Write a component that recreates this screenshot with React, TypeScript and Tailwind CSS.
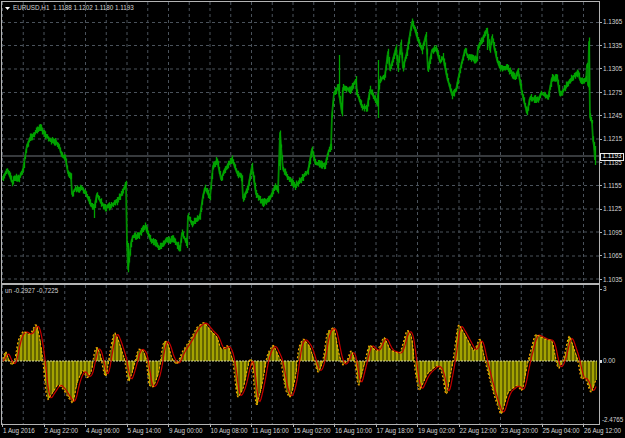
const PRICE: number[][] = [[2,179],[4,176],[7,170],[9,174],[12,182],[15,178],[19,178],[23,170],[27,145],[30,138],[35,133],[40,127],[45,135],[50,140],[55,142],[59,146],[62,156],[65,156],[68,173],[71,176],[72,194],[75,189],[82,188],[86,194],[90,203],[94,209],[97,194],[100,201],[105,208],[110,206],[117,201],[122,193],[126,183],[127,243],[128,269],[131,243],[133,236],[138,236],[145,226],[150,239],[155,243],[159,248],[165,241],[173,239],[180,249],[182,233],[187,244],[188,216],[192,224],[200,216],[203,196],[205,188],[210,198],[213,166],[217,160],[221,179],[225,169],[232,159],[237,173],[242,178],[243,198],[248,188],[252,166],[256,194],[263,203],[270,198],[275,186],[278,191],[280,133],[281,146],[283,169],[288,178],[295,186],[302,178],[308,171],[312,149],[315,163],[325,166],[328,153],[331,146],[332,115],[334,93],[338,87],[342,113],[343,88],[350,90],[356,80],[357,93],[362,107],[367,108],[370,90],[377,103],[380,80],[385,75],[388,52],[390,70],[396,48],[398,68],[401,43],[403,68],[407,52],[412,22],[415,30],[418,40],[422,50],[426,35],[428,70],[432,50],[436,48],[440,62],[443,57],[447,77],[452,95],[456,90],[460,70],[465,50],[468,57],[477,60],[478,47],[487,30],[490,50],[492,37],[497,60],[500,68],[507,68],[515,78],[518,70],[522,93],[527,113],[530,98],[538,100],[541,93],[548,98],[552,78],[557,77],[560,95],[570,80],[578,72],[580,80],[586,80],[587,65],[588,85],[589,42],[590,117],[592,122],[593,140],[594,146],[595,160]];
const SPIKES: number[][] = [[94,205,218],[128,243,270],[339,55,95],[342,90,115],[378,60,118],[280,133,170],[589,42,90],[595,146,165],[487,30,50],[356,78,95]];
const HIST: number[][] = [[3,361],[5,349],[8,358],[12,366],[15,360],[18,340],[23,331],[30,335],[36,323],[39,334],[43,361],[45,384],[47,401],[53,392],[58,384],[63,389],[68,397],[73,404],[77,382],[83,369],[87,379],[92,370],[94,352],[97,346],[101,357],[103,370],[106,379],[109,357],[114,331],[118,339],[125,361],[128,384],[133,370],[138,349],[143,350],[147,361],[148,384],[153,388],[159,372],[163,342],[167,341],[172,359],[177,365],[182,352],[190,340],[197,327],[204,322],[210,330],[217,337],[221,350],[228,345],[233,361],[237,399],[243,389],[250,357],[252,361],[256,409],[262,385],[267,355],[273,344],[278,355],[281,361],[285,389],[290,399],[296,375],[298,349],[303,338],[310,347],[314,361],[318,374],[323,361],[327,332],[334,327],[338,350],[342,366],[347,361],[351,349],[355,361],[358,389],[365,361],[369,344],[377,352],[384,336],[390,350],[400,354],[407,329],[412,337],[415,372],[419,392],[427,374],[437,365],[442,372],[446,398],[453,361],[458,323],[465,335],[474,352],[480,337],[485,361],[493,392],[501,416],[508,392],[517,385],[522,392],[528,361],[535,334],[547,340],[552,340],[558,370],[563,361],[569,334],[578,361],[581,380],[585,377],[591,394],[596,379]];
const TIMES = ["1 Aug 2016","2 Aug 22:00","4 Aug 06:00","5 Aug 14:00","9 Aug 00:00","10 Aug 08:00","11 Aug 16:00","15 Aug 02:00","16 Aug 10:00","17 Aug 18:00","19 Aug 02:00","22 Aug 12:00","23 Aug 20:00","25 Aug 04:00","26 Aug 12:00"];
const PRICES = ["1.1365","1.1335","1.1305","1.1275","1.1245","1.1215","1.1185","1.1155","1.1125","1.1095","1.1065","1.1035"];
const HGRID = [22.5,45.5,69,92.5,115.5,139,162,185.5,209,232,256,279];
const VGRID = Array.from({length:29},(_,i)=>2.5+i*20.75);
const lerp=(pts:number[][],x:number)=>{for(let i=1;i<pts.length;i++){if(x<=pts[i][0]){const [a,b]=pts[i-1],[c,d]=pts[i];return b+(d-b)*(x-a)/(c-a);}}return pts[pts.length-1][1];};
const rnd=(n:number)=>{const s=Math.sin(n*12.9898)*43758.5453;return s-Math.floor(s);};
const poly=(p:number[][])=>p.map(q=>q.join(",")).join(" ");
let priceBars="";
for(let x=2;x<=595;x++){const y=lerp(PRICE,x);priceBars+=`M${x+.5} ${(y-1.2-rnd(x)*3.2).toFixed(1)}V${(y+1.2+rnd(x+77)*3.2).toFixed(1)}`;}
for(const [x,a,b] of SPIKES)priceBars+=`M${x+.5} ${a}V${b}`;
const xs:number[]=[];for(let x=3;x<=596;x++)xs.push(x);
const smooth=(x:number,w:number)=>{let s=0;for(let i=-w;i<=w;i++)s+=lerp(HIST,Math.max(3,Math.min(596,x+i)));return s/(2*w+1);};
let bright="",dark="";
for(const x of xs){const y=smooth(x,1).toFixed(1);const seg=`M${x+.5} 361V${y}`;if(x%4<2)bright+=seg;else dark+=seg;}
const signal=xs.map(x=>[x,+smooth(x-2.5,2).toFixed(1)]);
const fast=xs.map(x=>[x,+smooth(x,1).toFixed(1)]);
const grid="#4a525b";

export default function App(){
  return (
    <div className="w-[625px] h-[438px] bg-black overflow-hidden flex flex-col pt-px text-[6.3px] text-[#d4d4d4] font-['Liberation_Sans',sans-serif]">
      <section className="relative flex h-[283px] shrink-0">
        <div className="ml-px w-[599px] border border-[#b4b4b4] bg-black relative">
          <svg width="597" height="281" viewBox="2 2 597 281" className="block">
            {HGRID.map(y=><line key={y} x1="2" x2="599" y1={y} y2={y} stroke={grid} strokeDasharray="3 3"/>)}
            {VGRID.map(x=><line key={x} x1={x} x2={x} y1="2" y2="283" stroke={grid} strokeDasharray="3 3"/>)}
            <line x1="2" x2="599" y1="156" y2="156" stroke="#4a4e52" strokeWidth="1.6"/>
            <polyline points={poly(PRICE)} fill="none" stroke="#008c00" strokeWidth="1.8" strokeLinejoin="round"/>
            <path d={priceBars} stroke="#00a200" strokeWidth="1.3"/>
          </svg>
          <div className="absolute left-[3px] top-[2px] flex items-center gap-[3px] leading-[8px] whitespace-pre">
            <svg width="5" height="3" viewBox="0 0 5 3"><path d="M0 0H5L2.5 3Z" fill="#fff"/></svg>
            <span>EURUSD,H1  1.1188 1.1202 1.1180 1.1193</span>
          </div>
        </div>
        <aside className="w-[25px] flex flex-col pt-[9.4px]">
          {PRICES.map(p=>(
            <div key={p} className="h-[23.4px] shrink-0 flex items-center gap-px">
              <span className="w-[2px] h-px bg-[#b4b4b4]"/>
              <span>{p}</span>
            </div>
          ))}
        </aside>
        <div className="absolute left-[600px] top-[151.5px] w-[24px] h-[8px] bg-black border border-[#e8e8e8] text-white flex items-center justify-center leading-none">1.1193</div>
      </section>
      <section className="relative flex h-[141px] shrink-0">
        <div className="ml-px w-[599px] border border-[#b4b4b4] bg-black relative">
          <svg width="597" height="139" viewBox="2 285 597 139" className="block">
            {VGRID.map(x=><line key={x} x1={x} x2={x} y1="285" y2="424" stroke={grid} strokeDasharray="3 3"/>)}
            <path d={dark} stroke="#646400" strokeWidth="1"/>
            <path d={bright} stroke="#a3a300" strokeWidth="1"/>
            <line x1="2" x2="597" y1="361" y2="361" stroke="#d9d99a" strokeDasharray="2 1"/>
            <polyline points={poly(signal)} fill="none" stroke="#c40000" strokeWidth="1.2"/>
            <polyline points={poly(fast)} fill="none" stroke="#ffa500" strokeWidth="1.1" strokeDasharray="2 2"/>
          </svg>
          <div className="absolute left-[3px] top-[2px] leading-[8px]">un -0.2927 -0.7225</div>
        </div>
        <aside className="w-[25px] flex flex-col pt-px leading-[8px]">
          <div className="flex items-center gap-px h-[8px]"><span className="w-[2px] h-px bg-[#b4b4b4]"/><span>3</span></div>
          <div className="flex items-center gap-px h-[8px] mt-[64px]"><span className="w-[2px] h-[3px] bg-[#d9d9d9]"/><span>0.00</span></div>
          <div className="flex items-center h-[8px] mt-[51px] pl-[2px]"><span>-2.4765</span></div>
        </aside>
      </section>
      <footer className="flex pl-[2px] shrink-0">
        {TIMES.map(t=>(
          <div key={t} className="w-[41.5px] shrink-0 flex flex-col whitespace-nowrap">
            <span className="w-px h-[2px] bg-[#b4b4b4]"/>
            <span className="leading-[8px] pl-px">{t}</span>
          </div>
        ))}
      </footer>
    </div>
  );
}
